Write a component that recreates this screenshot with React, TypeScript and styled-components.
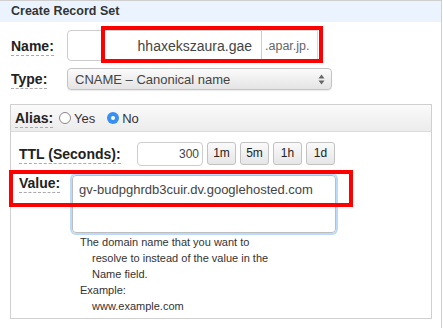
import React from "react";
import styled, { createGlobalStyle } from "styled-components";

const Global = createGlobalStyle`
  html, body { margin: 0; padding: 0; background: #fff; overflow: hidden; }
  body { font-family: "Liberation Sans", Arial, sans-serif; color: #333; }
`;

const Page = styled.div`
  position: relative;
  width: 443px;
  height: 328px;
  overflow: hidden;
`;

const Panel = styled.div`
  margin-left: -1px;
  width: 443px;
  height: 340px;
  border: 1px solid #cfcfcf;
  box-sizing: border-box;
`;

const Header = styled.div`
  height: 21px;
  line-height: 21px;
  padding-left: 11px;
  background: #eaf3fe;
  font-weight: bold;
  font-size: 12.5px;
  color: #333;
`;

const Body = styled.div`
  padding: 8px 0 0 11px;
`;

const Row = styled.div<{ $mt?: number }>`
  display: flex;
  align-items: center;
  margin-top: ${(p) => p.$mt ?? 0}px;
`;

const Label = styled.span<{ $w: number }>`
  width: ${(p) => p.$w}px;
  flex: none;
  font-weight: bold;
  font-size: 14px;
  color: #222;
  span {
    border-bottom: 1px dashed #aaa;
    padding-bottom: 1px;
  }
`;

const NameInput = styled.div`
  width: 195px;
  height: 31px;
  box-sizing: border-box;
  border: 1px solid #cdcdcd;
  border-radius: 4px 0 0 4px;
  display: flex;
  align-items: center;
  justify-content: flex-end;
  padding-right: 9px;
  font-size: 14px;
  color: #444;
`;

const Suffix = styled.div`
  width: 56px;
  height: 31px;
  box-sizing: border-box;
  border: 1px solid #d8d8d8;
  border-left: none;
  display: flex;
  align-items: center;
  padding-left: 3px;
  font-size: 12.5px;
  color: #666;
`;

const Select = styled.div`
  width: 265px;
  height: 22px;
  box-sizing: border-box;
  border: 1px solid #c4c4c4;
  border-radius: 4px;
  background: linear-gradient(#fbfbfb, #e4e4e4);
  box-shadow: 0 1px 1px rgba(0, 0, 0, 0.08);
  display: flex;
  align-items: center;
  justify-content: space-between;
  padding: 0 6px 0 7px;
  font-size: 13px;
  color: #444;
`;

const Inner = styled.div`
  margin: 14px 0 0 -1px;
  width: 422px;
  height: 215px;
  box-sizing: border-box;
  border: 1px solid #d0d0d0;
`;

const AliasBar = styled.div`
  height: 26px;
  background: linear-gradient(#fafafa, #ececec);
  border-bottom: 1px solid #dcdcdc;
  display: flex;
  align-items: center;
  padding-left: 4px;
  font-size: 13px;
`;

const RadioLabel = styled.label`
  display: flex;
  align-items: center;
  gap: 3px;
  margin-left: 4px;
  margin-right: 8px;
  color: #333;
`;

const Radio = styled.span<{ $on?: boolean }>`
  width: 12px;
  height: 12px;
  box-sizing: border-box;
  border-radius: 50%;
  border: ${(p) => (p.$on ? "none" : "1px solid #888")};
  background: ${(p) => (p.$on ? "#3a8ff2" : "#fff")};
  display: flex;
  align-items: center;
  justify-content: center;
  &::after {
    content: "";
    width: 4px;
    height: 4px;
    border-radius: 50%;
    background: ${(p) => (p.$on ? "#fff" : "transparent")};
  }
`;

const InnerBody = styled.div`
  padding: 10px 0 0 8px;
`;

const TtlInput = styled.div`
  width: 66px;
  height: 24px;
  box-sizing: border-box;
  border: 1px solid #cdcdcd;
  border-radius: 4px;
  display: flex;
  align-items: center;
  justify-content: flex-end;
  padding-right: 3px;
  font-size: 12px;
  color: #444;
`;

const Btn = styled.div`
  width: 29px;
  height: 23px;
  box-sizing: border-box;
  margin-left: 4px;
  margin-top: -2px;
  border: 1px solid #c2c2c2;
  border-radius: 3px;
  background: linear-gradient(#fafafa, #e6e6e6);
  display: flex;
  align-items: center;
  justify-content: center;
  font-size: 12px;
  color: #222;
`;

const ValueRow = styled.div`
  display: flex;
  align-items: flex-start;
  margin-top: 9px;
`;

const TextArea = styled.div`
  width: 264px;
  height: 58px;
  box-sizing: border-box;
  border: 1px solid #bdbdbd;
  border-radius: 4px;
  box-shadow: 0 0 0 2px #bcdbfb;
  padding: 6px 0 0 6px;
  font-size: 13px;
  color: #444;
`;

const Help = styled.div`
  margin: 1px 0 0 61px;
  font-size: 11px;
  line-height: 16px;
  color: #333;
`;

const Indent = styled.div`
  padding-left: 12px;
`;

const RedBox = styled.div<{ $l: number; $t: number; $w: number; $h: number }>`
  position: absolute;
  left: ${(p) => p.$l}px;
  top: ${(p) => p.$t}px;
  width: ${(p) => p.$w}px;
  height: ${(p) => p.$h}px;
  box-sizing: border-box;
  border: 4px solid #ff0000;
  pointer-events: none;
`;

const Arrows = () => (
  <svg width="7" height="11" viewBox="0 0 7 11">
    <path d="M3.5 0.5 L6.5 4.5 L0.5 4.5 Z" fill="#666" />
    <path d="M3.5 10.5 L6.5 6.5 L0.5 6.5 Z" fill="#666" />
  </svg>
);

export default function App() {
  return (
    <Page>
      <Global />
      <Panel>
        <Header>Create Record Set</Header>
        <Body>
          <Row>
            <Label $w={56}>
              <span>Name:</span>
            </Label>
            <NameInput>hhaxekszaura.gae</NameInput>
            <Suffix>.apar.jp.</Suffix>
          </Row>
          <Row $mt={7}>
            <Label $w={56}>
              <span>Type:</span>
            </Label>
            <Select>
              <span>CNAME – Canonical name</span>
              <Arrows />
            </Select>
          </Row>
          <Inner>
            <AliasBar>
              <Label $w={40}>
                <span>Alias:</span>
              </Label>
              <RadioLabel>
                <Radio />
                Yes
              </RadioLabel>
              <RadioLabel>
                <Radio $on />
                No
              </RadioLabel>
            </AliasBar>
            <InnerBody>
              <Row>
                <Label $w={118}>
                  <span>TTL (Seconds):</span>
                </Label>
                <TtlInput>300</TtlInput>
                <Btn>1m</Btn>
                <Btn>5m</Btn>
                <Btn>1h</Btn>
                <Btn>1d</Btn>
              </Row>
              <ValueRow>
                <Label $w={53}>
                  <span>Value:</span>
                </Label>
                <TextArea>gv-budpghrdb3cuir.dv.googlehosted.com</TextArea>
              </ValueRow>
              <Help>
                <div>The domain name that you want to</div>
                <Indent>resolve to instead of the value in the</Indent>
                <Indent>Name field.</Indent>
                <div>Example:</div>
                <Indent>www.example.com</Indent>
              </Help>
            </InnerBody>
          </Inner>
        </Body>
      </Panel>
      <RedBox $l={101} $t={26} $w={222} $h={37} />
      <RedBox $l={9} $t={170} $w={344} $h={37} />
    </Page>
  );
}
